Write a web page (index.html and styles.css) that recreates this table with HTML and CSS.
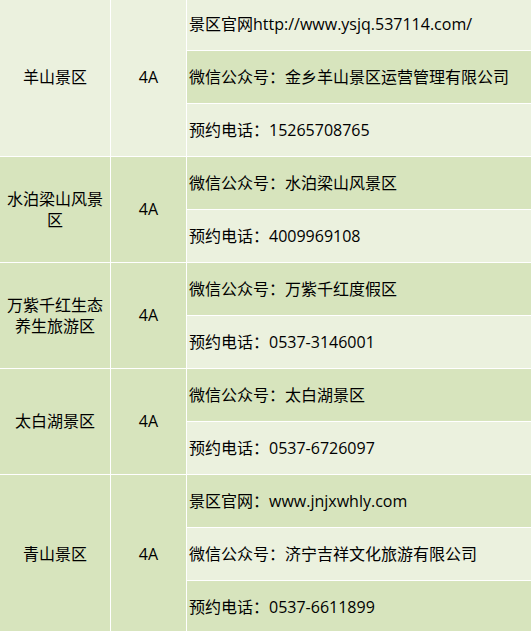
FILE: index.html
```html
<!DOCTYPE html>
<html lang="zh-CN">
<head>
<meta charset="utf-8">
<title>景区信息</title>
<link rel="stylesheet" href="styles.css">
</head>
<body>
<div class="table">
  <div class="cell name light span3">羊山景区</div>
  <div class="cell level light span3">4A</div>
  <div class="cell info light">景区官网http://www.ysjq.537114.com/</div>
  <div class="cell info dark">微信公众号：金乡羊山景区运营管理有限公司</div>
  <div class="cell info light">预约电话：15265708765</div>

  <div class="cell name dark span2">水泊梁山风景区</div>
  <div class="cell level dark span2">4A</div>
  <div class="cell info dark">微信公众号：水泊梁山风景区</div>
  <div class="cell info light">预约电话：4009969108</div>

  <div class="cell name dark span2">万紫千红生态养生旅游区</div>
  <div class="cell level dark span2">4A</div>
  <div class="cell info dark">微信公众号：万紫千红度假区</div>
  <div class="cell info light">预约电话：0537-3146001</div>

  <div class="cell name dark span2">太白湖景区</div>
  <div class="cell level dark span2">4A</div>
  <div class="cell info dark">微信公众号：太白湖景区</div>
  <div class="cell info light">预约电话：0537-6726097</div>

  <div class="cell name dark span3">青山景区</div>
  <div class="cell level dark span3">4A</div>
  <div class="cell info dark">景区官网：www.jnjxwhly.com</div>
  <div class="cell info light">微信公众号：济宁吉祥文化旅游有限公司</div>
  <div class="cell info dark">预约电话：0537-6611899</div>
</div>
</body>
</html>
```

FILE: styles.css
```css
html, body {
  margin: 0;
  padding: 0;
  background: #ffffff;
  overflow: hidden;
}

.table {
  display: grid;
  grid-template-columns: 110px 75px 1fr;
  grid-auto-rows: 52px;
  gap: 1px;
  background: #ffffff;
  margin-top: -2px;
  width: 531px;
  font-family: "Open Sans", "Noto Sans CJK SC", sans-serif;
  font-size: 16px;
  line-height: 21px;
  color: #000000;
}

.cell {
  display: flex;
  align-items: center;
}

.light { background: #ebf1de; }
.dark { background: #d7e4bd; }

.name {
  grid-column: 1;
  justify-content: center;
  text-align: center;
  padding: 0 5px;
}

.level {
  grid-column: 2;
  justify-content: center;
}

.info {
  grid-column: 3;
  padding-left: 2px;
  white-space: nowrap;
}

.span2 { grid-row: span 2; }
.span3 { grid-row: span 3; }
```
